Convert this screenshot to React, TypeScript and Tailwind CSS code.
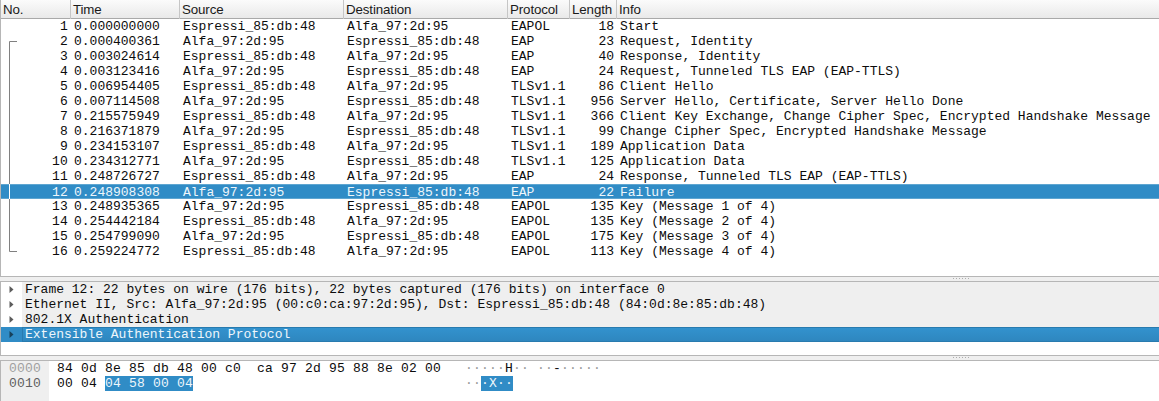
type Packet = [string, string, string, string, string, string, string];

const E = 'Espressi_85:db:48';
const A = 'Alfa_97:2d:95';

const packets: Packet[] = [
  ['1', '0.000000000', E, A, 'EAPOL', '18', 'Start'],
  ['2', '0.000400361', A, E, 'EAP', '23', 'Request, Identity'],
  ['3', '0.003024614', E, A, 'EAP', '40', 'Response, Identity'],
  ['4', '0.003123416', A, E, 'EAP', '24', 'Request, Tunneled TLS EAP (EAP-TTLS)'],
  ['5', '0.006954405', E, A, 'TLSv1.1', '86', 'Client Hello'],
  ['6', '0.007114508', A, E, 'TLSv1.1', '956', 'Server Hello, Certificate, Server Hello Done'],
  ['7', '0.215575949', E, A, 'TLSv1.1', '366', 'Client Key Exchange, Change Cipher Spec, Encrypted Handshake Message'],
  ['8', '0.216371879', A, E, 'TLSv1.1', '99', 'Change Cipher Spec, Encrypted Handshake Message'],
  ['9', '0.234153107', E, A, 'TLSv1.1', '189', 'Application Data'],
  ['10', '0.234312771', A, E, 'TLSv1.1', '125', 'Application Data'],
  ['11', '0.248726727', E, A, 'EAP', '24', 'Response, Tunneled TLS EAP (EAP-TTLS)'],
  ['12', '0.248908308', A, E, 'EAP', '22', 'Failure'],
  ['13', '0.248935365', A, E, 'EAPOL', '135', 'Key (Message 1 of 4)'],
  ['14', '0.254442184', E, A, 'EAPOL', '135', 'Key (Message 2 of 4)'],
  ['15', '0.254799090', A, E, 'EAPOL', '175', 'Key (Message 3 of 4)'],
  ['16', '0.259224772', E, A, 'EAPOL', '113', 'Key (Message 4 of 4)'],
];

const columns = ['No.', 'Time', 'Source', 'Destination', 'Protocol', 'Length', 'Info'];

const details = [
  'Frame 12: 22 bytes on wire (176 bits), 22 bytes captured (176 bits) on interface 0',
  'Ethernet II, Src: Alfa_97:2d:95 (00:c0:ca:97:2d:95), Dst: Espressi_85:db:48 (84:0d:8e:85:db:48)',
  '802.1X Authentication',
  'Extensible Authentication Protocol',
];

const grid = 'grid grid-cols-[70px_109px_164px_164px_62px_47px_1fr]';

function Bracket({ index }: { index: number }) {
  if (index < 1) return null;
  const d = index === 1 ? 'M16 7.5H8.5V15' : index === 15 ? 'M8.5 0V7.5H16' : 'M8.5 0V15';
  return (
    <svg width="18" height="15" viewBox="0 0 18 15" className="shrink-0" fill="none">
      <path d={d} stroke={index === 11 ? '#ffffff' : '#808080'} />
    </svg>
  );
}

function PacketRow({ packet, index }: { packet: Packet; index: number }) {
  const selected = index === 11;
  const text = selected ? 'pt-px' : '';
  return (
    <div
      className={`${grid} h-[15px] ${
        selected
          ? 'bg-[#308cc6] text-[#eef6fb] shadow-[inset_0_1px_0_#5fa6d1,inset_0_-1px_0_#5fa6d1]'
          : 'text-[#0c0c0c]'
      }`}
    >
      <div className="flex justify-between pr-[3.3px]">
        <Bracket index={index} />
        <span className={`ml-auto ${text}`}>{packet[0]}</span>
      </div>
      <div className={`pl-[3px] ${text}`}>{packet[1]}</div>
      <div className={`pl-[3px] ${text}`}>{packet[2]}</div>
      <div className={`pl-[3px] ${text}`}>{packet[3]}</div>
      <div className={`pl-[3px] ${text}`}>{packet[4]}</div>
      <div className={`pr-[3px] text-right ${text}`}>{packet[5]}</div>
      <div className={`pl-[3px] ${text}`}>{packet[6]}</div>
    </div>
  );
}

function Splitter() {
  return (
    <div className="flex h-1 shrink-0 justify-center bg-[#efefef] pt-px">
      <div className="ml-[763px] flex h-px gap-[2px]">
        {[0, 1, 2, 3, 4, 5].map((n) => (
          <i key={n} className="size-px bg-[#adadad]" />
        ))}
      </div>
    </div>
  );
}

export default function App() {
  return (
    <div className="flex h-[401px] w-[1159px] flex-col overflow-hidden bg-white font-['Liberation_Mono',monospace] text-[13px] leading-[15px] whitespace-pre">
      <section className="h-[277px] shrink-0 border-b border-l border-[#b6b6b6]">
        <div
          className={`${grid} h-[19px] border-b border-[#a9a9a9] bg-linear-to-b from-[#fbfbfb] to-[#e9e9e9] font-['Liberation_Sans',sans-serif] text-[13.33px] leading-[19px] tracking-[-0.12px] text-[#1a1a1a]`}
        >
          {columns.map((name, i) => (
            <div key={name} className={i < 6 ? 'border-r border-[#c6c6c6] pl-[2px]' : 'pl-[2px]'}>
              {name}
            </div>
          ))}
        </div>
        {packets.map((packet, i) => (
          <PacketRow key={packet[0]} packet={packet} index={i} />
        ))}
      </section>
      <Splitter />
      <section className="h-[75px] shrink-0 border-y border-l border-[#b6b6b6]">
        {details.map((line, i) => (
          <div key={line} className="flex h-[15px]">
            <div className={`w-[21px] ${i === 3 ? 'bg-[#308cc6]' : 'bg-white'}`}>
              <svg width="21" height="15" viewBox="0 0 21 15">
                <path d="M8.5 4L12.5 7.5L8.5 11Z" fill={i === 3 ? '#17405a' : '#5c5c5c'} />
              </svg>
            </div>
            <div
              className={`grow pl-[3px] ${
                i === 3
                  ? 'bg-linear-to-b from-[#3393cf] to-[#2e86be] text-[#eef6fb] shadow-[inset_0_1px_0_#287baf,inset_0_-1px_0_#287baf,inset_1px_0_0_#287baf]'
                  : 'bg-[#efefef] text-[#0c0c0c]'
              }`}
            >
              {line}
            </div>
          </div>
        ))}
      </section>
      <Splitter />
      <section className="flex h-[41px] shrink-0 border-t border-l border-[#b6b6b6] tracking-[0.2px] text-[#0c0c0c]">
        <div className="w-12 bg-[#efefef] pl-2 text-[#606060]">
          <div className="text-[#a0a0a0]">0000</div>
          <div>0010</div>
        </div>
        <div className="w-[416px] pl-2">
          <div>84 0d 8e 85 db 48 00 c0  ca 97 2d 95 88 8e 02 00</div>
          <div className="flex">
            <span>00 04 </span>
            <span className="bg-[#308cc6] text-[#eef6fb]">04 58 00 04</span>
          </div>
        </div>
        <div className="text-[#999999]">
          <div>
            ·····<span className="text-[#0c0c0c]">H</span>·· ··<span className="text-[#0c0c0c]">-</span>·····
          </div>
          <div className="flex">
            <span>··</span>
            <span className="bg-[#308cc6] text-[#eef6fb]">·X··</span>
          </div>
        </div>
      </section>
    </div>
  );
}
